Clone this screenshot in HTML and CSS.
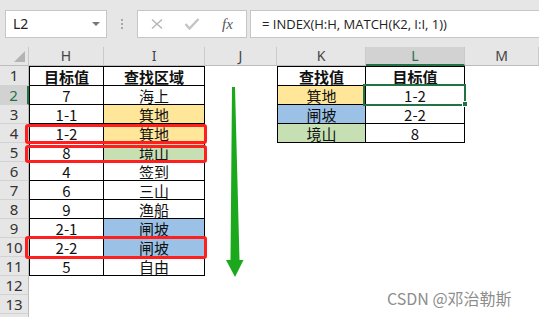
FILE: index.html
```html
<!DOCTYPE html>
<html lang="zh-CN">
<head>
    <meta charset="UTF-8">
    <title>INDEX MATCH 近似查找</title>
    <link rel="stylesheet" href="styles.css">
</head>
<body>
    <div class="app">
        <div class="toolbar">
            <div class="namebox">L2<span class="caret"></span></div>
            <div class="dots"><i></i><i></i><i></i></div>
            <div class="fxbox">
                <svg class="ico" width="14" height="12" viewBox="0 0 14 12"><path d="M2 1.5 L12 10.5 M12 1.5 L2 10.5" stroke="#b4b4b4" stroke-width="1.4" fill="none"/></svg>
                <svg class="ico" width="16" height="12" viewBox="0 0 16 12"><path d="M1.5 6 L5.5 10.5 L14.5 1" stroke="#c4c4c4" stroke-width="2.4" fill="none"/></svg>
                <span class="fx">fx</span>
            </div>
            <div class="formula">= INDEX(H:H, MATCH(K2, I:I, 1))</div>
        </div>

        <div class="grid">
            <div class="corner"><span></span></div>
            <div class="hd">H</div><div class="hd">I</div><div class="hd">J</div><div class="hd">K</div><div class="hd sel">L</div><div class="hd">M</div>

            <div class="rh">1</div>
            <div class="c l t b">目标值</div><div class="c t b">查找区域</div><div></div><div class="c l t b">查找值</div><div class="c t b">目标值</div><div></div>

            <div class="rh sel">2</div>
            <div class="c l">7</div><div class="c">海上</div><div></div><div class="c l y">箕地</div><div class="c">1-2</div><div></div>

            <div class="rh">3</div>
            <div class="c l">1-1</div><div class="c y">箕地</div><div></div><div class="c l bl">闸坡</div><div class="c">2-2</div><div></div>

            <div class="rh">4</div>
            <div class="c l">1-2</div><div class="c y">箕地</div><div></div><div class="c l g">境山</div><div class="c">8</div><div></div>

            <div class="rh">5</div>
            <div class="c l">8</div><div class="c g">境山</div><div></div><div></div><div></div><div></div>

            <div class="rh">6</div>
            <div class="c l">4</div><div class="c">签到</div><div></div><div></div><div></div><div></div>

            <div class="rh">7</div>
            <div class="c l">6</div><div class="c">三山</div><div></div><div></div><div></div><div></div>

            <div class="rh">8</div>
            <div class="c l">9</div><div class="c">渔船</div><div></div><div></div><div></div><div></div>

            <div class="rh">9</div>
            <div class="c l">2-1</div><div class="c bl">闸坡</div><div></div><div></div><div></div><div></div>

            <div class="rh">10</div>
            <div class="c l">2-2</div><div class="c bl">闸坡</div><div></div><div></div><div></div><div></div>

            <div class="rh">11</div>
            <div class="c l">5</div><div class="c">自由</div><div></div><div></div><div></div><div></div>

            <div class="rh">12</div>
            <div></div><div></div><div></div><div></div><div></div><div></div>

            <div class="rh">13</div>
            <div></div><div></div><div></div><div></div><div></div><div></div>

            <div class="rh"></div>
            <div></div><div></div><div></div><div></div><div></div><div></div>
        </div>

        <!-- overlays -->
        <div class="active"></div>
        <div class="handle"></div>
        <div class="mark m1"></div>
        <div class="mark m2"></div>
        <div class="mark m3"></div>
        <svg class="arrow" width="22" height="195" viewBox="0 0 22 195">
            <polygon points="8,2 11,2 15.5,175 19.5,175 11,192 2,175 6.5,175" fill="#1ca81c"/>
        </svg>
        <div class="watermark">CSDN @邓治勒斯</div>
    </div>
</body>
</html>
```

FILE: styles.css
```css
* {
    box-sizing: border-box;
}
body {
    margin: 0;
    background: #ffffff;
}
.app {
    position: relative;
    width: 539px;
    height: 317px;
    overflow: hidden;
    background: #e6e6e6;
}

/* formula bar */
.toolbar {
    height: 47px;
    display: flex;
    align-items: flex-start;
    padding: 10px 0 0 5px;
}
.namebox {
    position: relative;
    width: 102px;
    height: 28px;
    background: #fff;
    border: 1px solid #c6c6c6;
    font-family: "Noto Sans", sans-serif;
    font-size: 14px;
    line-height: 26px;
    padding-left: 7px;
    color: #222;
}
.caret {
    position: absolute;
    right: 6px;
    top: 11px;
    border-left: 4px solid transparent;
    border-right: 4px solid transparent;
    border-top: 4px solid #777;
}
.dots {
    width: 3px;
    margin: 9px 0 0 14px;
    display: flex;
    flex-direction: column;
    gap: 2px;
}
.dots i {
    width: 2px;
    height: 2px;
    background: #a8a8a8;
}
.fxbox {
    width: 110px;
    height: 28px;
    margin-left: 13px;
    background: #fff;
    border: 1px solid #c6c6c6;
    display: flex;
    align-items: center;
    padding-left: 12px;
    gap: 20px;
}
.fx {
    font-family: "Liberation Serif", serif;
    font-style: italic;
    font-size: 15px;
    color: #555;
    margin-left: 2px;
}
.formula {
    flex: 1;
    height: 28px;
    margin-left: 3px;
    background: #fff;
    border: 1px solid #c6c6c6;
    border-right: none;
    font-family: "Open Sans", sans-serif;
    font-size: 13px;
    line-height: 26px;
    padding-left: 11px;
    color: #222;
    white-space: nowrap;
}

/* sheet */
.grid {
    display: grid;
    grid-template-columns: 29px 75px 101px 72px 89px 99px 74px;
    grid-template-rows: 19px 20px repeat(13, 19px);
    background: #fff;
    font-family: "Noto Sans CJK SC", sans-serif;
    font-size: 15px;
    color: #111;
}
.grid > div {
    display: flex;
    align-items: center;
    justify-content: center;
    line-height: 1;
}
.corner {
    background: #e6e6e6;
    border-right: 1px solid #c8c8c8;
    border-bottom: 1px solid #bdbdbd;
    position: relative;
}
.corner span {
    position: absolute;
    right: 3px;
    bottom: 3px;
    border-left: 11px solid transparent;
    border-bottom: 11px solid #b4b4b4;
}
.hd {
    background: #e6e6e6;
    border-right: 1px solid #cacaca;
    border-bottom: 1px solid #bdbdbd;
    font-family: "Noto Sans", sans-serif;
    font-size: 14px;
    color: #444;
}
.hd.sel {
    background: #d2d2d2;
    border-bottom: 2px solid #217346;
    color: #217346;
}
.rh {
    background: #e6e6e6;
    border-right: 1px solid #bdbdbd;
    border-bottom: 1px solid #d2d2d2;
    font-family: "Noto Sans", sans-serif;
    font-size: 15px;
    color: #333;
}
.rh.sel {
    background: #d2d2d2;
    border-right: 2px solid #217346;
    color: #217346;
}
.c {
    border-right: 1px solid #000;
    border-bottom: 1px solid #000;
}
.c.l { border-left: 1px solid #000; }
.c.t { border-top: 1px solid #000; }
.c.b { font-weight: bold; }
.y { background: #ffe699; }
.g { background: #c6e0b4; }
.bl { background: #9bc2e6; }

/* overlays */
.active {
    position: absolute;
    left: 363px;
    top: 84px;
    width: 103px;
    height: 22px;
    border: 2px solid #217346;
}
.handle {
    position: absolute;
    left: 462px;
    top: 101px;
    width: 6px;
    height: 6px;
    background: #217346;
    border: 1px solid #fff;
}
.mark {
    position: absolute;
    left: 25px;
    width: 182px;
    border: 3px solid #ff1f1f;
    border-radius: 3px;
}
.m1 { top: 124px; height: 20px; }
.m2 { top: 145px; height: 18px; }
.m3 { top: 236px; height: 23px; }
.arrow {
    position: absolute;
    left: 224px;
    top: 85px;
}
.watermark {
    position: absolute;
    left: 387px;
    top: 287px;
    font-family: "Noto Sans CJK SC", sans-serif;
    font-size: 16px;
    line-height: 22px;
    color: #8d8d8d;
    white-space: nowrap;
}
```
